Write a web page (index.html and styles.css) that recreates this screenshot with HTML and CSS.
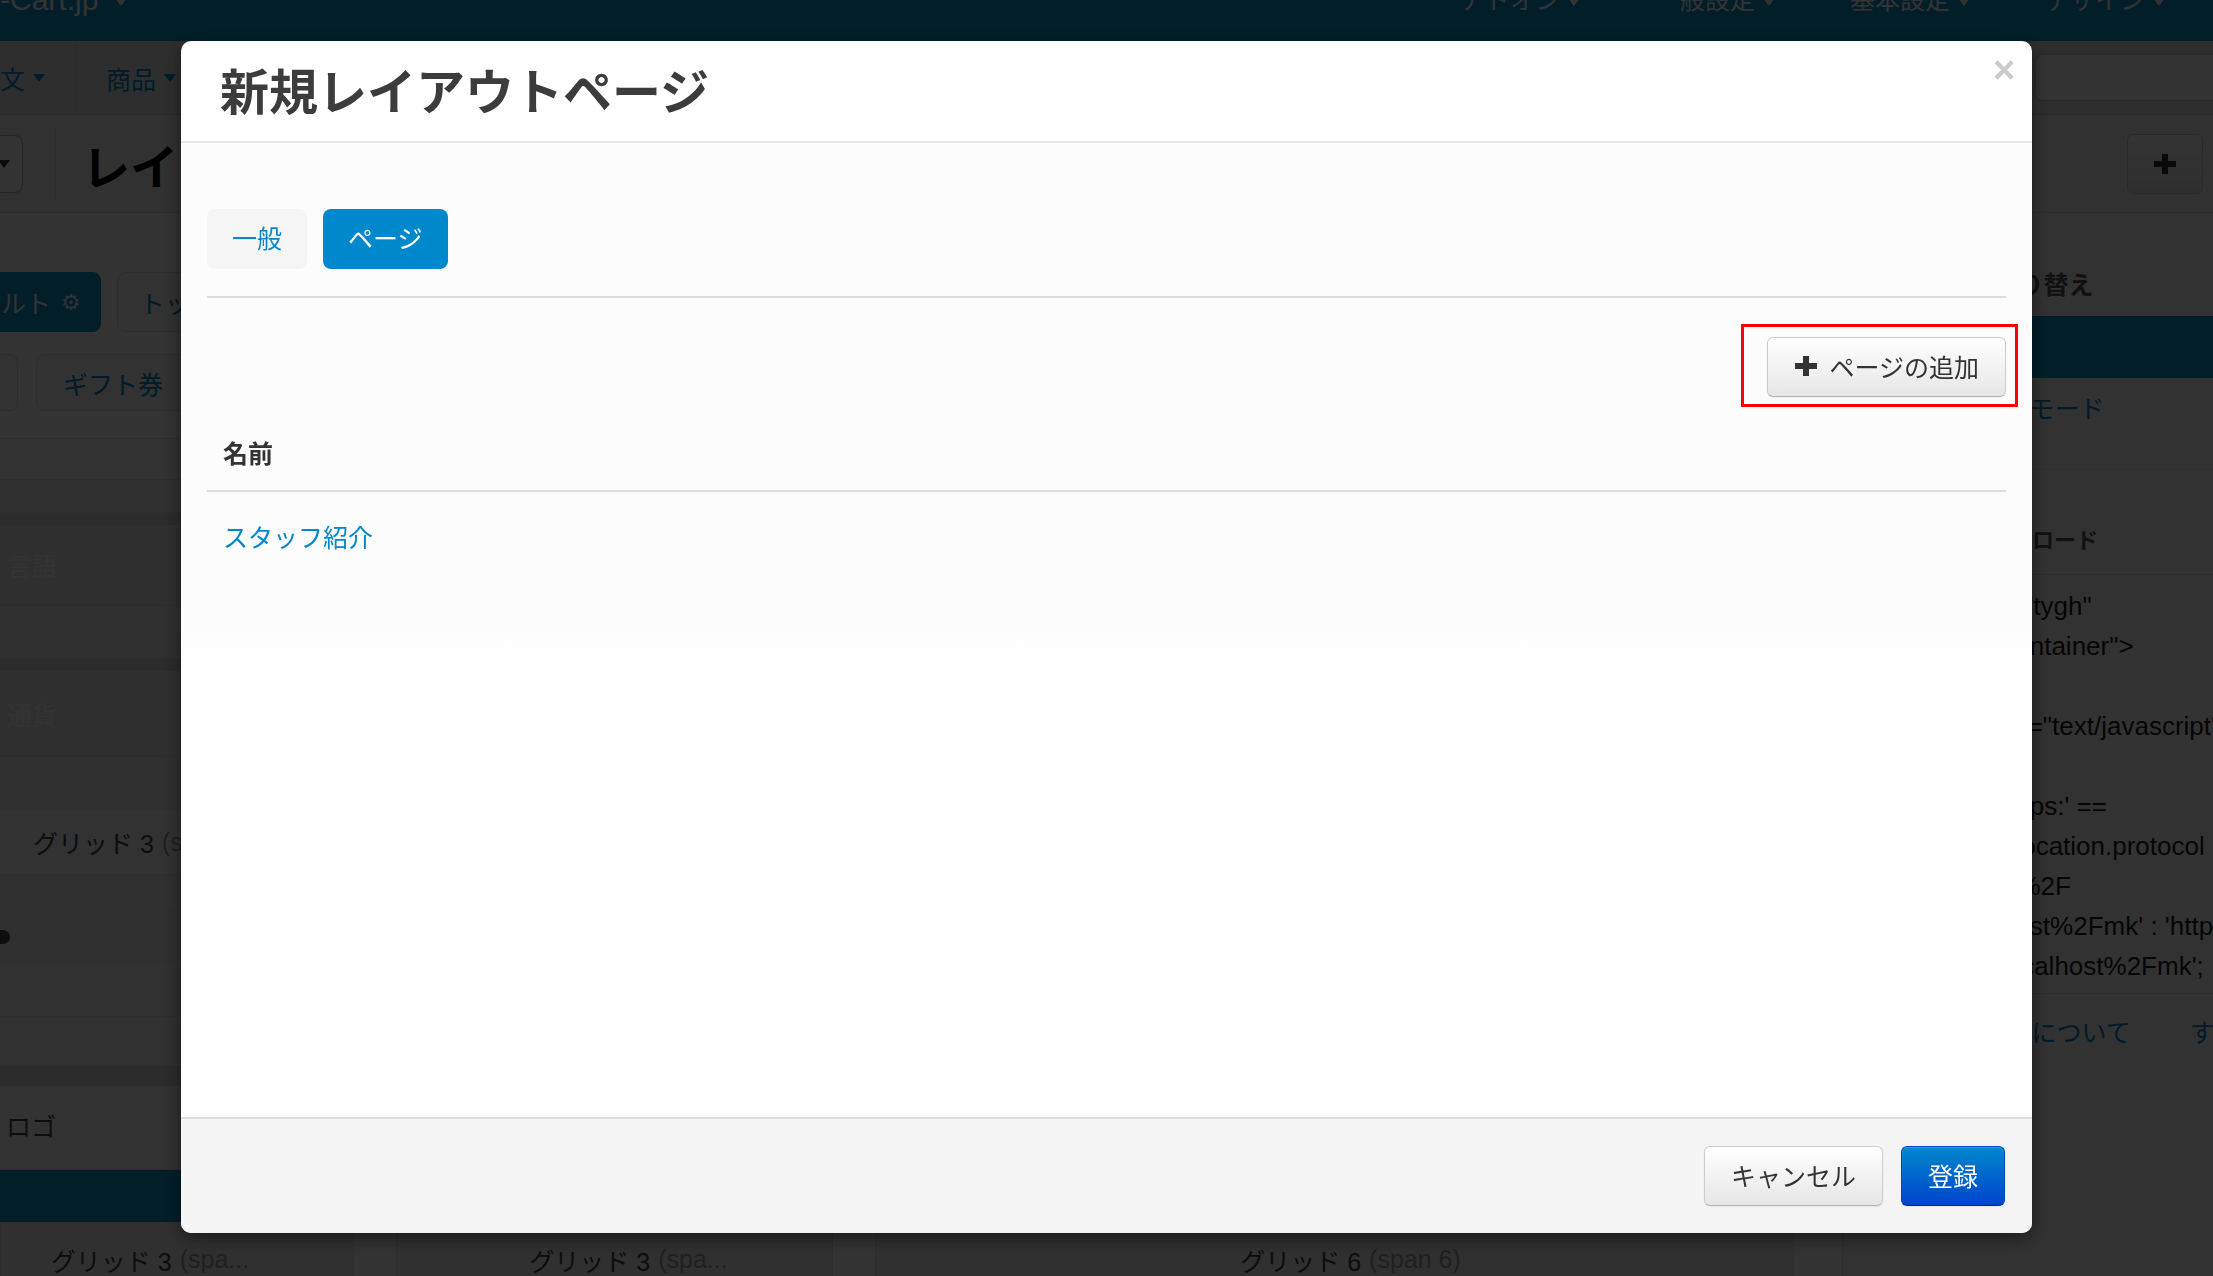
FILE: index.html
```html
<!DOCTYPE html>
<html lang="ja">
<head>
    <meta charset="UTF-8">
    <meta name="viewport" content="width=device-width, initial-scale=1.0">
    <title>レイアウト</title>
    <link rel="stylesheet" href="styles.css">
</head>
<body>
    <div class="page">
        <header class="topbar">
            <div class="brand">-Cart.jp <span class="caret"></span></div>
            <nav class="topnav">
                <span>アドオン<span class="caret"></span></span>
                <span>一般設定<span class="caret"></span></span>
                <span>基本設定<span class="caret"></span></span>
                <span>デザイン<span class="caret"></span></span>
            </nav>
        </header>

        <nav class="menubar">
            <a class="menu-item first">文<span class="caret"></span></a>
            <a class="menu-item">商品<span class="caret"></span></a>
            <span class="search"></span>
        </nav>

        <div class="titlebar">
            <span class="back-btn"><span class="caret"></span></span>
            <span class="title-divider"></span>
            <h1>レイアウト</h1>
            <button class="add-btn" type="button">
                <svg width="22" height="20" viewBox="0 0 22 20"><path d="M8 0h6v7h8v6h-8v7H8v-7H0V7h8z"/></svg>
            </button>
        </div>

        <div class="workspace">
            <main class="editor">
                <div class="layout-tabs">
                    <div class="tab-row">
                        <span class="ltab current">ルト <span class="gear">⚙</span></span>
                        <span class="ltab">トップページ</span>
                    </div>
                    <div class="tab-row second">
                        <span class="ltab stub"></span>
                        <span class="ltab">ギフト券</span>
                    </div>
                </div>

                <div class="grid-top">
                    <div class="grid-col">
                        <div class="cell top"></div>
                        <div class="cell sub"></div>
                        <div class="gutter"></div>
                        <div class="block faded">言語</div>
                        <div class="cell drop"></div>
                        <div class="gutter"></div>
                        <div class="block faded tall">通貨</div>
                        <div class="cell drop"></div>
                        <div class="grid-head">グリッド 3 <span class="muted">(span 3)</span></div>
                        <div class="cell sub short"></div>
                        <div class="cell drop"><span class="dot"></span></div>
                        <div class="cell drop alt"></div>
                        <div class="cell drop low"></div>
                        <div class="gutter wide"></div>
                        <div class="block logo">ロゴ</div>
                    </div>
                </div>

                <div class="container-bar"></div>

                <div class="grid-bottom">
                    <div class="col-head span3">グリッド 3 <span class="muted">(spa...</span></div>
                    <div class="col-head span3b">グリッド 3 <span class="muted">(spa...</span></div>
                    <div class="col-head span6">グリッド 6 <span class="muted">(span 6)</span></div>
                </div>
            </main>

            <aside class="sidebar">
                <div class="side-head">ページの切り替え</div>
                <div class="side-active"></div>
                <div class="side-link"><a>ビジュアルモード</a></div>
                <div class="side-head second">スクリプトのロード</div>
                <div class="code">&lt;div class="tygh"
id="tygh_container"&gt;
&lt;/div&gt;
&lt;script type="text/javascript"&gt;
(function(){
var url = 'https:' ==
document.location.protocol
 'https%3A%2F
%2Flocalhost%2Fmk' : 'http
%2F%2Flocalhost%2Fmk';</div>
                <div class="side-links"><a>このページについて</a><a>すべてのページ</a></div>
            </aside>
        </div>
    </div>

    <div class="modal-backdrop"></div>

    <div class="modal">
        <div class="modal-header">
            <button class="close" type="button">&times;</button>
            <h3>新規レイアウトページ</h3>
        </div>

        <div class="modal-body">
            <ul class="nav-tabs">
                <li><a href="#">一般</a></li>
                <li class="active"><a href="#">ページ</a></li>
            </ul>

            <div class="toolbar">
                <span class="highlight">
                    <button class="btn btn-add" type="button">
                        <svg class="icon-plus" width="22" height="20" viewBox="0 0 22 20"><path d="M8 0h6v7h8v6h-8v7H8v-7H0V7h8z"/></svg>
                        ページの追加
                    </button>
                </span>
            </div>

            <table class="pages">
                <thead>
                    <tr><th>名前</th></tr>
                </thead>
                <tbody>
                    <tr><td><a href="#">スタッフ紹介</a></td></tr>
                </tbody>
            </table>
        </div>

        <div class="modal-footer">
            <button class="btn" type="button">キャンセル</button>
            <button class="btn btn-primary" type="button">登録</button>
        </div>
    </div>
</body>
</html>
```

FILE: styles.css
```css
* {
    box-sizing: border-box;
}

html, body {
    margin: 0;
    height: 100%;
}

body {
    font-family: "Liberation Sans", "Noto Sans CJK JP", sans-serif;
    font-size: 25px;
    color: #333;
    overflow: hidden;
}

a {
    cursor: pointer;
}

.caret {
    display: inline-block;
    width: 0;
    height: 0;
    margin-left: 8px;
    vertical-align: middle;
    border-top: 8px solid currentColor;
    border-left: 6px solid transparent;
    border-right: 6px solid transparent;
}

/* Page behind the dialog */
.page {
    height: 100vh;
    display: flex;
    flex-direction: column;
    background: #fff;
    overflow: hidden;
}

.topbar {
    flex: none;
    height: 41px;
    display: flex;
    align-items: flex-start;
    justify-content: space-between;
    background: #0596cd;
    color: #fff;
    overflow: hidden;
}

.brand {
    margin-top: -20px;
    font-size: 30px;
    line-height: 40px;
}

.topnav {
    display: flex;
    gap: 75px;
    padding-right: 48px;
    margin-top: -18px;
    line-height: 36px;
}

.menubar {
    flex: none;
    height: 74px;
    display: flex;
    align-items: stretch;
    background: #e6e6e6;
    border-bottom: 1px solid #ccc;
}

.menu-item {
    display: flex;
    align-items: center;
    padding: 0 30px;
    color: #0088cc;
    border-right: 1px solid #d2d2d2;
}

.menu-item.first {
    padding-left: 0;
}

.search {
    margin-left: auto;
    align-self: center;
    width: 178px;
    height: 47px;
    background: #fff;
    border: 1px solid #ccc;
    border-right: 0;
    border-radius: 8px 0 0 8px;
}

.titlebar {
    flex: none;
    height: 98px;
    display: flex;
    align-items: center;
    background: #f5f5f5;
    border-bottom: 1px solid #ddd;
}

.back-btn {
    width: 23px;
    height: 58px;
    display: flex;
    align-items: center;
    background: #fff;
    border: 1px solid #bbb;
    border-left: 0;
    border-radius: 0 8px 8px 0;
    color: #333;
}

.back-btn .caret {
    margin-left: -2px;
}

.title-divider {
    width: 1px;
    height: 70px;
    margin-left: 32px;
    background: #ddd;
}

.titlebar h1 {
    margin: 0 0 0 26px;
    font-size: 48px;
    font-weight: 700;
    color: #000;
}

.add-btn {
    margin: 0 10px 0 auto;
    width: 76px;
    height: 60px;
    display: flex;
    align-items: center;
    justify-content: center;
    border: 1px solid #ccc;
    border-radius: 6px;
    background: linear-gradient(#fff, #e6e6e6);
    fill: #333;
}

.workspace {
    flex: 1;
    min-height: 0;
    display: flex;
}

.editor {
    flex: 1;
    min-width: 0;
    display: flex;
    flex-direction: column;
    overflow: hidden;
}

.editor > * {
    flex-shrink: 0;
}

.layout-tabs {
    display: flex;
    flex-direction: column;
    gap: 22px;
    padding: 59px 0 27px;
    border-bottom: 1px solid #ddd;
}

.tab-row {
    display: flex;
    gap: 16px;
}

.tab-row.second {
    gap: 18px;
}

.ltab {
    height: 60px;
    display: flex;
    align-items: center;
    padding: 0 22px;
    background: #f7f7f7;
    border: 1px solid #ddd;
    border-radius: 8px;
    color: #0088cc;
    white-space: nowrap;
}

.ltab.current {
    gap: 10px;
    padding: 0 19px 0 0;
    background: #0596cd;
    border-color: #0596cd;
    border-radius: 0 8px 8px 0;
    color: #fff;
}

.gear {
    font-family: "DejaVu Sans", sans-serif;
    font-size: 22px;
    color: #e8f4fa;
}

.tab-row.second .ltab {
    height: 57px;
    padding: 0 26px;
}

.tab-row.second .ltab.stub {
    width: 18px;
    padding: 0;
    border-left: 0;
    border-radius: 0 8px 8px 0;
}

/* Layout grid */
.grid-top {
    display: flex;
}

.grid-col {
    width: 354px;
    display: flex;
    flex-direction: column;
}

.grid-col > * {
    flex-shrink: 0;
}

.cell {
    border-bottom: 1px solid #e4e4e4;
}

.cell.top {
    height: 41px;
    background: #fafafa;
}

.cell.sub {
    height: 33px;
    background: #f0f0f0;
}

.cell.sub.short {
    height: 36px;
}

.cell.drop {
    height: 53px;
    display: flex;
    align-items: center;
    background: #efefef;
}

.cell.drop.alt {
    background: #f4f4f4;
}

.cell.drop.low {
    height: 49px;
    background: #f4f4f4;
}

.dot {
    width: 10px;
    height: 14px;
    background: #444;
    border-radius: 0 7px 7px 0;
}

.gutter {
    height: 12px;
    background: #d9d9d9;
}

.gutter.wide {
    height: 20px;
}

.block {
    height: 81px;
    display: flex;
    align-items: center;
    padding-left: 7px;
    background: #ececec;
    border-bottom: 1px solid #ddd;
}

.block.faded {
    color: #fff;
}

.block.tall {
    height: 86px;
}

.block.logo {
    height: 84px;
    padding: 0 0 6px 6px;
    background: #f7f7f7;
    color: #444;
}

.grid-head {
    height: 65px;
    display: flex;
    align-items: center;
    gap: 8px;
    padding-left: 33px;
    background: #fafafa;
    border-bottom: 1px solid #e4e4e4;
    color: #444;
    white-space: nowrap;
}

.muted {
    color: #a0a0a0;
}

.container-bar {
    height: 52px;
    margin-right: 48px;
    background: #0596cd;
}

.grid-bottom {
    display: flex;
    gap: 42px;
    margin-right: 48px;
}

.col-head {
    height: 76px;
    display: flex;
    align-items: center;
    justify-content: center;
    gap: 8px;
    background: #f0f0f0;
    border: 1px solid #ddd;
    border-top: 0;
    color: #444;
    white-space: nowrap;
}

.col-head.span3 {
    width: 354px;
    padding-right: 54px;
}

.col-head.span3b {
    width: 437px;
    padding-left: 28px;
}

.col-head.span6 {
    width: 919px;
    padding-left: 32px;
}

/* Right sidebar */
.sidebar {
    width: 371px;
    flex: none;
    display: flex;
    flex-direction: column;
    background: #fafafa;
    border-left: 1px solid #ddd;
    white-space: nowrap;
    overflow: hidden;
}

.sidebar > * {
    flex-shrink: 0;
}

.side-head {
    height: 103px;
    padding: 54px 0 0 51px;
    font-weight: 700;
    line-height: 36px;
    color: #555;
}

.side-head.second {
    height: 105px;
    padding: 53px 0 0 57px;
    font-size: 22px;
    border-bottom: 1px solid #ddd;
}

.side-active {
    height: 62px;
    background: #0596cd;
}

.side-link {
    height: 92px;
    padding: 13px 0 0 64px;
    line-height: 36px;
    border-bottom: 1px solid #e8e8e8;
}

.side-link a,
.side-links a {
    color: #0088cc;
}

.code {
    height: 419px;
    padding: 11px 0 0 51px;
    font: 26px/40px "Liberation Sans", sans-serif;
    color: #222;
    white-space: pre;
    border-bottom: 1px solid #ddd;
    overflow: hidden;
}

.side-links {
    display: flex;
    gap: 59px;
    padding: 21px 0 0 64px;
    line-height: 36px;
}

/* Dialog */
.modal-backdrop {
    position: fixed;
    inset: 0;
    background: rgba(0, 0, 0, 0.8);
}

.modal {
    position: fixed;
    top: 41px;
    left: 181px;
    width: 1851px;
    height: 1192px;
    display: flex;
    flex-direction: column;
    background: #fff;
    border-radius: 10px;
    box-shadow: 0 5px 18px rgba(0, 0, 0, 0.5);
    overflow: hidden;
    font-family: "Noto Sans CJK JP", "Liberation Sans", sans-serif;
}

.modal-header {
    position: relative;
    flex: none;
    height: 102px;
    display: flex;
    align-items: center;
    padding: 0 0 5px 39px;
    border-bottom: 2px solid #e8e8e8;
}

.modal-header h3 {
    margin: 0;
    font-size: 49px;
    line-height: 1;
    font-weight: 700;
    color: #3c3c3c;
}

.close {
    position: absolute;
    top: 14px;
    right: 13px;
    width: 30px;
    height: 30px;
    padding: 0;
    border: 0;
    background: none;
    font: bold 38px/30px "Liberation Sans", sans-serif;
    color: #cbcbcb;
    cursor: pointer;
}

.modal-body {
    flex: 1;
    padding: 66px 26px 0;
    background: linear-gradient(#fcfcfc, #fcfcfc 480px, #fff 520px);
}

.nav-tabs {
    display: flex;
    gap: 16px;
    margin: 0;
    padding: 0 0 27px;
    list-style: none;
    border-bottom: 2px solid #ddd;
}

.nav-tabs a {
    display: block;
    height: 60px;
    padding: 0 25px;
    line-height: 56px;
    border-radius: 8px;
    background: #f5f5f5;
    color: #0088cc;
    text-decoration: none;
}

.nav-tabs .active a {
    background: #0088cc;
    color: #fff;
}

.toolbar {
    display: flex;
    justify-content: flex-end;
    margin-top: 39px;
}

/* red annotation frame around the add button */
.highlight {
    position: relative;
    display: flex;
}

.highlight::after {
    content: "";
    position: absolute;
    top: -13px;
    right: -12px;
    bottom: -10px;
    left: -26px;
    border: 3px solid #f00;
}

.btn {
    height: 60px;
    display: inline-flex;
    align-items: center;
    gap: 12px;
    padding: 0 26px 2px;
    font-family: inherit;
    font-size: 25px;
    color: #333;
    background: linear-gradient(#fff, #e6e6e6);
    border: 1px solid #ccc;
    border-bottom-color: #b3b3b3;
    border-radius: 6px;
    box-shadow: inset 0 1px 0 rgba(255, 255, 255, 0.2), 0 1px 2px rgba(0, 0, 0, 0.05);
    cursor: pointer;
}

.btn-add {
    padding-left: 27px;
}

.icon-plus {
    fill: #333;
}

.btn-primary {
    color: #fff;
    background: linear-gradient(#0088cc, #0044cc);
    border-color: #0044cc #0044cc #002a80;
}

.pages {
    width: 100%;
    margin-top: 27px;
    border-collapse: collapse;
}

.pages th {
    padding: 10px 16px 20px;
    text-align: left;
    font-size: 25px;
    font-weight: 700;
    line-height: 36px;
    color: #333;
    border-bottom: 2px solid #ddd;
}

.pages td {
    padding: 26px 16px;
    font-size: 25px;
    line-height: 36px;
}

.pages td a {
    color: #0088cc;
    text-decoration: none;
}

.modal-footer {
    flex: none;
    height: 116px;
    display: flex;
    align-items: center;
    justify-content: flex-end;
    gap: 18px;
    padding: 0 27px;
    background: #f4f4f4;
    border-top: 2px solid #ddd;
}
```
